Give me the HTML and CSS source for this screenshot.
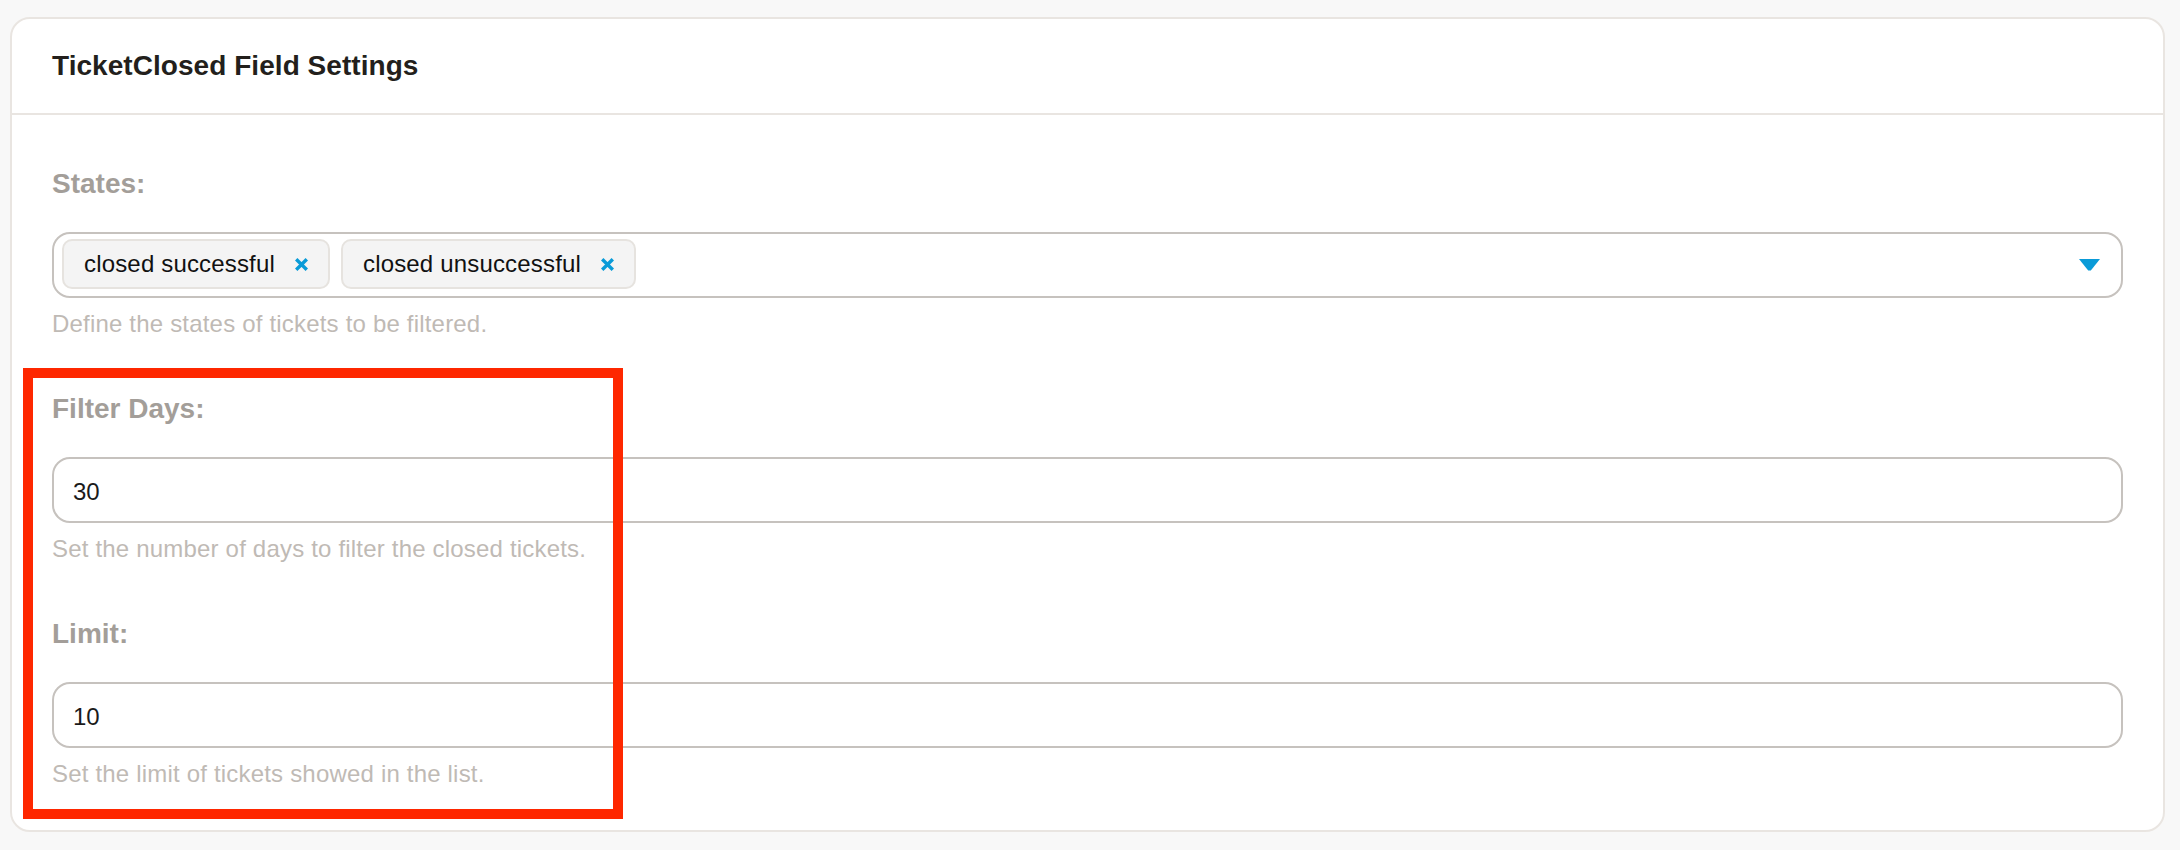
FILE: index.html
```html
<!DOCTYPE html>
<html lang="en">
<head>
<meta charset="utf-8">
<title>TicketClosed Field Settings</title>
<link rel="stylesheet" href="styles.css">
</head>
<body>
<div class="card">
  <div class="card-header">
    <h2 class="card-title">TicketClosed Field Settings</h2>
  </div>
  <div class="card-body">
    <div class="field">
      <div class="label">States:</div>
      <div class="select">
        <div class="chips">
          <span class="chip">closed successful
            <svg class="chip-x" width="13" height="13" viewBox="0 0 13 13"><path d="M1.2 1.2 L11.8 11.8 M11.8 1.2 L1.2 11.8" stroke="#0a9bd8" stroke-width="3.4" fill="none"/></svg>
          </span>
          <span class="chip">closed unsuccessful
            <svg class="chip-x" width="13" height="13" viewBox="0 0 13 13"><path d="M1.2 1.2 L11.8 11.8 M11.8 1.2 L1.2 11.8" stroke="#0a9bd8" stroke-width="3.4" fill="none"/></svg>
          </span>
        </div>
        <svg class="caret" width="21" height="12" viewBox="0 0 21 12"><polygon points="0,0 21,0 11.8,11.5 9.2,11.5" fill="#0a9bd8"/></svg>
      </div>
      <div class="help">Define the states of tickets to be filtered.</div>
    </div>
    <div class="field">
      <div class="label">Filter Days:</div>
      <input class="input" type="text" value="30">
      <div class="help">Set the number of days to filter the closed tickets.</div>
    </div>
    <div class="field">
      <div class="label">Limit:</div>
      <input class="input" type="text" value="10">
      <div class="help">Set the limit of tickets showed in the list.</div>
    </div>
  </div>
  <div class="highlight"></div>
</div>
</body>
</html>
```

FILE: styles.css
```css
html, body {
  margin: 0;
  background: #f8f8f8;
}
body {
  padding: 17px 15px 16px 10px;
  font-family: "Liberation Sans", Arial, Helvetica, sans-serif;
}
.card {
  position: relative;
  background: #fff;
  border: 2px solid #e9e5e1;
  border-radius: 20px;
}
.card-header {
  padding: 31px 40px;
  border-bottom: 2px solid #e9e5e1;
}
.card-title {
  margin: 0;
  font-size: 28px;
  line-height: 32px;
  font-weight: 700;
  color: #231f1c;
  letter-spacing: 0.05px;
}
.card-body {
  padding: 53px 40px 42px;
}
.field + .field {
  margin-top: 55px;
}
.label {
  font-size: 28px;
  line-height: 32px;
  font-weight: 700;
  color: #a39e99;
  margin-bottom: 32px;
}
.select {
  box-sizing: border-box;
  height: 66px;
  border: 2px solid #c6c2be;
  border-radius: 18px;
  display: flex;
  align-items: flex-start;
  padding: 5px 21px 0 8px;
}
.chips {
  display: flex;
  gap: 11px;
}
.chip {
  box-sizing: border-box;
  height: 50px;
  display: flex;
  align-items: center;
  gap: 20px;
  padding: 0 20px;
  background: #f4f4f4;
  border: 2px solid #e6e3df;
  border-radius: 10px;
  font-size: 24px;
  letter-spacing: 0.17px;
  color: #111;
  white-space: nowrap;
}
.chip-x {
  display: block;
  flex: none;
}
.caret {
  display: block;
  margin-left: auto;
  align-self: center;
  margin-top: -5px;
}
.input {
  display: block;
  box-sizing: border-box;
  width: 100%;
  height: 66px;
  margin: 0;
  padding: 3px 19px 0;
  border: 2px solid #c6c2be;
  border-radius: 18px;
  background: #fff;
  font-family: "Liberation Sans", Arial, Helvetica, sans-serif;
  font-size: 24px;
  color: #1a1a1a;
  outline: none;
}
.help {
  margin-top: 12px;
  font-size: 24px;
  line-height: 28px;
  letter-spacing: 0.19px;
  color: #bfbab5;
}
.highlight {
  position: absolute;
  left: 11px;
  top: 349px;
  width: 600px;
  height: 451px;
  box-sizing: border-box;
  border: 10px solid #fe2700;
  pointer-events: none;
}
```
